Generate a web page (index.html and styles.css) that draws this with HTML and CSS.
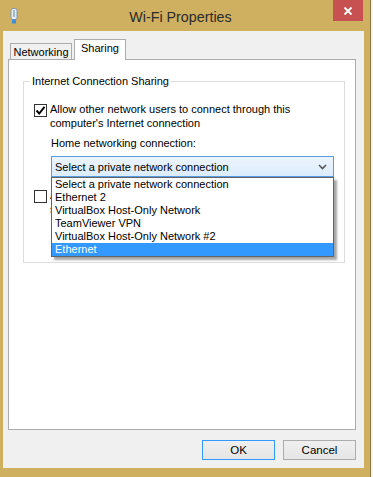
FILE: index.html
```html
<!DOCTYPE html>
<html>
<head>
<meta charset="utf-8">
<link rel="stylesheet" href="styles.css">
</head>
<body>
<div class="window">
  <div class="titlebar">
    <svg class="app-icon" width="8" height="16" viewBox="0 0 8 16">
      <rect x="1" y="0.5" width="6" height="11" rx="2" fill="#e8eef4" stroke="#7f97ad"/>
      <rect x="3" y="2" width="2" height="7" fill="#9fb6cc"/>
      <rect x="2" y="11.5" width="4" height="4" fill="#3f8fd8"/>
    </svg>
    <div class="title">Wi-Fi Properties</div>
    <div class="close">
      <svg width="10" height="10" viewBox="0 0 10 10"><path d="M1.5 1.5 L8.5 8.5 M8.5 1.5 L1.5 8.5" stroke="#fff" stroke-width="1.8"/></svg>
    </div>
  </div>
  <div class="client">
    <div class="tabs">
      <div class="tab">Networking</div>
      <div class="tab active">Sharing</div>
    </div>
    <div class="panel">
      <fieldset class="group">
        <legend>Internet Connection Sharing</legend>
        <div class="check-row">
          <span class="checkbox">
            <svg width="11" height="11" viewBox="0 0 11 11"><path d="M1.5 5.5 L4.2 8.5 L9.5 1.8" fill="none" stroke="#000" stroke-width="1.9"/></svg>
          </span>
          <span class="check-label">Allow other network users to connect through this computer's Internet connection</span>
        </div>
        <div class="home-label">Home networking connection:</div>
        <div class="combo-wrap">
          <div class="combo">
            <span>Select a private network connection</span>
            <svg class="chev" width="9" height="6" viewBox="0 0 9 6"><path d="M1 1 L4.5 4.5 L8 1" fill="none" stroke="#555" stroke-width="1.6"/></svg>
          </div>
          <ul class="dropdown">
            <li>Select a private network connection</li>
            <li>Ethernet 2</li>
            <li>VirtualBox Host-Only Network</li>
            <li>TeamViewer VPN</li>
            <li>VirtualBox Host-Only Network #2</li>
            <li class="selected">Ethernet</li>
          </ul>
        </div>
        <div class="check-row second">
          <span class="checkbox"></span>
          <span class="check-label">Allow other network users to control or disable the shared Internet connection</span>
        </div>
      </fieldset>
    </div>
    <div class="buttons">
      <button class="btn default">OK</button>
      <button class="btn">Cancel</button>
    </div>
  </div>
</div>
</body>
</html>
```
FILE: styles.css
```css
html, body {
  margin: 0;
  padding: 0;
}
body {
  width: 373px;
  height: 477px;
  overflow: hidden;
  background: #f4f4f4;
  font-family: "Liberation Sans", Arial, sans-serif;
  font-size: 11px;
  color: #000;
}
.window {
  width: 371px;
  height: 477px;
  background: #cfb060;
  border-right: 1px solid #8c7740;
  display: flex;
  flex-direction: column;
  box-sizing: border-box;
}
.titlebar {
  height: 31px;
  display: flex;
  align-items: flex-start;
  flex: none;
}
.app-icon {
  margin: 8px 0 0 10px;
}
.title {
  flex: 1;
  text-align: center;
  font-size: 14.3px;
  line-height: 18px;
  margin-top: 8px;
  color: #2b2b2b;
  padding-left: 10px;
}
.close {
  width: 30px;
  height: 21px;
  background: #c75050;
  display: flex;
  align-items: center;
  justify-content: center;
  margin-right: 7px;
}
.client {
  flex: 1;
  margin: 0 6px 9px 3px;
  background: #f0f0f0;
  padding: 8px 8px 8px 5px;
  display: flex;
  flex-direction: column;
}
.tabs {
  display: flex;
  align-items: flex-end;
  padding-left: 2px;
  height: 20px;
  position: relative;
  z-index: 1;
}
.tab {
  height: 16px;
  line-height: 16px;
  padding: 0;
  border: 1px solid #acacac;
  border-bottom: none;
  background: #f0f0f0;
  box-sizing: border-box;
  width: 62px;
  text-align: center;
}
.tab.active {
  height: 21px;
  width: 52px;
  margin-left: 2px;
  margin-bottom: -1px;
  background: #fff;
  line-height: 17px;
  padding-bottom: 3px;
}
.panel {
  flex: 1;
  background: #fff;
  border: 1px solid #acacac;
  padding: 14px 10px 0 14px;
}
.group {
  margin: 0;
  border: 1px solid #dcdcdc;
  padding: 14px 0 46px 10px;
  min-width: 0;
}
.group legend {
  padding: 0 2px;
  margin-left: -4px;
  line-height: 14px;
}
.check-row {
  display: flex;
  align-items: flex-start;
}
.checkbox {
  flex: none;
  width: 13px;
  height: 13px;
  border: 1px solid #333;
  box-sizing: border-box;
  background: #fff;
  display: flex;
  align-items: center;
  justify-content: center;
  margin-top: 2px;
}
.check-label {
  margin-left: 3px;
  line-height: 14px;
  width: 250px;
}
.home-label {
  margin: 6px 0 0 17px;
  line-height: 14px;
}
.combo-wrap {
  position: relative;
  margin: 6px 0 0 17px;
  width: 283px;
}
.combo {
  height: 21px;
  box-sizing: border-box;
  border: 1px solid #569de5;
  background: linear-gradient(#ecf4fc, #dcecfc);
  display: flex;
  align-items: center;
  justify-content: space-between;
  padding: 0 6px 0 3px;
}
.dropdown {
  position: absolute;
  left: 0;
  top: 21px;
  width: 283px;
  box-sizing: border-box;
  margin: 0;
  padding: 0;
  list-style: none;
  background: #fff;
  border: 1px solid #646464;
  box-shadow: 3px 3px 2px rgba(0, 0, 0, 0.35);
  z-index: 2;
}
.dropdown li {
  height: 13px;
  line-height: 13px;
  padding-left: 3px;
}
.dropdown li.selected {
  background: #3399ff;
  color: #fff;
}
.check-row.second {
  margin-top: 11px;
}
.buttons {
  display: flex;
  justify-content: flex-end;
  gap: 8px;
  margin-top: 10px;
}
.btn {
  width: 73px;
  height: 20px;
  font-family: "Liberation Sans", Arial, sans-serif;
  font-size: 11.5px;
  border: 1px solid #acacac;
  background: linear-gradient(#f0f0f0, #e5e5e5);
  padding: 0;
  color: #000;
}
.btn.default {
  border-color: #3399ff;
}
```
